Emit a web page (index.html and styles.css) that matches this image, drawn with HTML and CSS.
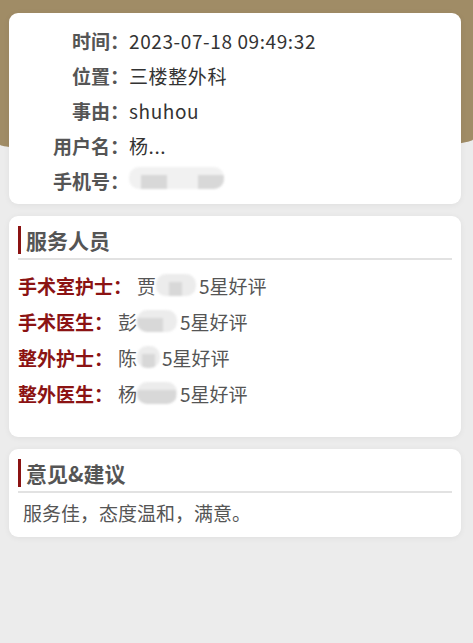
FILE: index.html
```html
<!DOCTYPE html>
<html>
<head>
    <meta charset="utf-8">
    <title>评价详情</title>
    <link rel="stylesheet" href="styles.css">
</head>
<body>
    <div class="top-bg"></div>
    <div class="page">
        <div class="card info-card">
            <div class="info-row"><span class="info-label">时间：</span><span class="info-value">2023-07-18 09:49:32</span></div>
            <div class="info-row"><span class="info-label">位置：</span><span class="info-value">三楼整外科</span></div>
            <div class="info-row"><span class="info-label">事由：</span><span class="info-value">shuhou</span></div>
            <div class="info-row"><span class="info-label">用户名：</span><span class="info-value">杨...</span></div>
            <div class="info-row"><span class="info-label">手机号：</span><span class="info-value"><span class="mask mask-phone"><i></i><i></i><b></b><i></i><i></i></span></span></div>
        </div>

        <div class="card">
            <div class="card-title">服务人员</div>
            <div class="staff-list">
                <div class="staff-row"><span class="staff-role">手术室护士：</span><span class="staff-name">贾<span class="mask mask-name"><b></b><i></i><b></b></span>5星好评</span></div>
                <div class="staff-row"><span class="staff-role">手术医生：</span><span class="staff-name">彭<span class="mask mask-name"><i></i><i></i><b></b></span>5星好评</span></div>
                <div class="staff-row"><span class="staff-role">整外护士：</span><span class="staff-name">陈<span class="mask mask-short"><i></i></span>5星好评</span></div>
                <div class="staff-row"><span class="staff-role">整外医生：</span><span class="staff-name">杨<span class="mask mask-name"><i></i><i></i><i></i></span>5星好评</span></div>
            </div>
        </div>

        <div class="card comment-card">
            <div class="card-title">意见&amp;建议</div>
            <div class="comment">服务佳，态度温和，满意。</div>
        </div>
    </div>
</body>
</html>
```

FILE: styles.css
```css
html, body {
    margin: 0;
    padding: 0;
}
body {
    background: #ececec;
    font-family: "Noto Sans CJK SC", "Noto Sans", sans-serif;
    color: #333;
    min-height: 643px;
    position: relative;
}
.top-bg {
    position: absolute;
    left: 0;
    top: 0;
    width: 100%;
    height: 152px;
    background: #a08c66;
    border-radius: 0 0 60% 50% / 0 0 14px 8px;
}
.page {
    position: relative;
    padding: 13px 12px 0 9px;
}
.card {
    background: #fff;
    border-radius: 9px;
    box-shadow: 0 1px 6px rgba(0, 0, 0, 0.06);
    padding: 10px 9px 10px 9px;
    margin-bottom: 12px;
}
.info-card {
    padding: 10px 0 6px 0;
}
.info-row {
    display: flex;
    align-items: center;
    height: 35px;
    font-size: 19px;
}
.info-label {
    width: 120px;
    text-align: right;
    font-weight: bold;
    color: #555;
}
.info-value {
    color: #333;
    letter-spacing: 0.6px;
}
.card-title {
    border-left: 3px solid #8b1313;
    padding-left: 5px;
    height: 28px;
    line-height: 28px;
    font-size: 21px;
    font-weight: bold;
    color: #555;
    position: relative;
}
.card-title::after {
    content: "";
    position: absolute;
    left: -3px;
    right: 0;
    bottom: -6px;
    height: 2px;
    background: #e2e2e2;
}
.staff-list {
    padding-top: 13px;
    padding-bottom: 16px;
}
.staff-row {
    display: flex;
    align-items: center;
    height: 36px;
    font-size: 19px;
}
.staff-role {
    color: #8b1313;
    font-weight: bold;
}
.staff-name {
    margin-left: 5px;
    color: #555;
    display: flex;
    align-items: center;
}
.comment-card {
    padding-bottom: 12px;
}
.comment {
    padding: 13px 0 0 5px;
    font-size: 19px;
    color: #555;
    line-height: 25px;
}

/* blurred private info */
.mask {
    display: inline-flex;
    align-items: flex-end;
    height: 22px;
    background: #ececec;
    border-radius: 10px;
    filter: blur(1px);
    overflow: hidden;
}
.mask i, .mask b {
    display: block;
    width: 13px;
    height: 14px;
    background: #d8d8d8;
}
.mask b {
    background: #ececec;
}
.mask-phone {
    width: 95px;
    justify-content: space-between;
    padding: 0 0 0 12px;
    box-sizing: border-box;
    background: #f1f1f1;
}
.mask-phone b {
    flex: 1;
    background: #f1f1f1;
}
.mask-name {
    width: 40px;
    margin: 0 3px 0 0;
}
.mask-short {
    width: 23px;
    justify-content: center;
    margin: 0 2px 0 0;
}
```
